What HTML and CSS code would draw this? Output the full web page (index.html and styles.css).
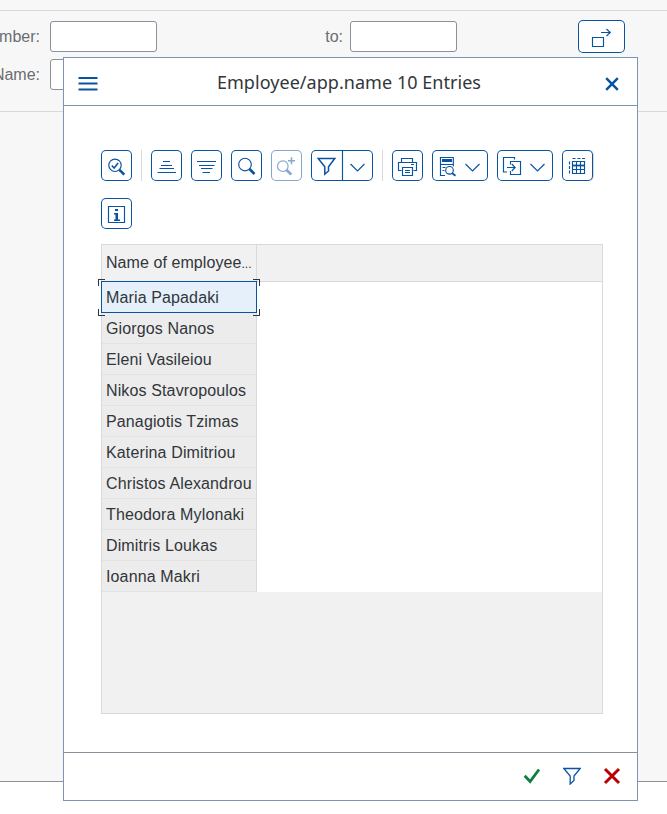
FILE: index.html
```html
<!DOCTYPE html>
<html lang="en">
<head>
<meta charset="utf-8">
<title>Employee entries</title>
<link rel="stylesheet" href="styles.css">
</head>
<body>
<main class="page">
  <section class="criteria">
    <div class="field-row">
      <label class="label first">mber:</label><span class="input"></span>
      <label class="label to">to:</label><span class="input"></span>
      <button class="btn multi"><svg width="47" height="33" viewBox="0 0 47 33"><path d="M14.5 17.5h11v9h-11zM23 12.5h9.5M28.5 9l3.8 3.5-3.8 3.5"/></svg></button>
    </div>
    <div class="field-row second">
      <label class="label first">Name:</label><span class="input"></span>
    </div>
  </section>
</main>

<div class="dialog" role="dialog">
  <header class="dialog-head">
    <svg class="menu" width="20" height="14" viewBox="0 0 20 14"><path d="M.5 1h19M.5 6.5h19M.5 12.5h19"/></svg>
    <h1 class="title">Employee/app.name 10 Entries</h1>
    <svg class="close" width="14" height="14" viewBox="0 0 14 14"><path d="M1.2 1.2l11.6 11.6M12.8 1.2L1.2 12.8"/></svg>
  </header>

  <div class="content">
    <div class="toolbar">
      <button class="btn"><svg viewBox="0 0 31 31"><circle cx="14" cy="15.3" r="6.2"/><path class="mid" d="M10.8 15.5l2.3 2.5 4-5"/><path class="bold" d="M18.5 19.8l4.8 4.8"/></svg></button>
      <i class="sep"></i>
      <button class="btn"><svg viewBox="0 0 31 31"><path d="M12 11.5h7M10 15.5h11M8.5 18.5H23M6.5 22.5H25"/></svg></button>
      <button class="btn"><svg viewBox="0 0 31 31"><path d="M6 11.5h19M8 15.5h15.5M10 18.5h11.5M11.5 22.5H19"/></svg></button>
      <button class="btn"><svg viewBox="0 0 31 31"><circle cx="14" cy="14.5" r="6.3"/><path class="bold" d="M18.5 19l5 5"/></svg></button>
      <button class="btn disabled"><svg viewBox="0 0 31 31"><circle cx="11.8" cy="16.2" r="5.3"/><path class="mid" d="M20.5 7.2v7M17 10.7h7"/><path class="bold" d="M15.5 20l4.8 4.5"/></svg></button>
      <button class="btn split"><svg viewBox="0 0 62 31" class="wide"><path class="mid" d="M7.2 8.5h16.6l-6.3 8.2V21l-3.7 3.2v-7.5z"/><path d="M31.5 0v31M39.5 14l7 7 7-7"/></svg></button>
      <i class="sep"></i>
      <button class="btn"><svg viewBox="0 0 31 31"><path d="M9.5 20.5h-3v-8h18v8h-3M9.5 12.5v-4h11v4M10.5 17.5h10v8h-10zM13 20.5h5M13 22.5h5M19 14.5h3"/></svg></button>
      <button class="btn menu-btn"><svg viewBox="0 0 56 31"><path d="M13 25.5H8.5v-18h12.800v9M8.500 14.500h12.800M10.500 17.500h3M10.500 20.500h2"/><path class="fill" d="M10 9h10v3H10z"/><circle cx="17.500" cy="20.300" r="3.800"/><path class="thick" d="M20.300 23.200l3.200 2.600"/><path d="M33.500 14l7 7 7-7"/></svg></button>
      <button class="btn menu-btn"><svg viewBox="0 0 56 31"><path d="M17.500 9.500v-2h-11V22H10M13.500 14.500v-3h10v13h-10v-3.500M10 17.500h8M14.800 14l3.400 3.500-3.400 3.500M33.500 14l7 7 7-7"/></svg></button>
      <button class="btn last"><svg viewBox="0 0 31 31"><path d="M10.500 11.500h12v12h-12zM14.500 11.500v12M18.500 11.500v12M10.500 19.500h12M10.500 8.500h3M15.500 8.500h3M20 8.500h3M7.500 11.500v3M7.500 16v3M7.500 20.500v3"/><path class="thick" d="M10 15.500h13"/></svg></button>
      <button class="btn"><svg viewBox="0 0 31 31"><path d="M7.500 8.500h16v16h-16z"/><path class="fill" d="M14 11h3v2h-3zM13 15h4v6.500h2V23h-6v-1.500h1.500v-5H13z"/></svg></button>
    </div>

    <div class="table">
      <div class="thead"><span class="th">Name of employee<small>...</small></span></div>
      <div class="tbody">
        <div class="cell selected">Maria Papadaki<i class="c tl"></i><i class="c tr"></i><i class="c bl"></i><i class="c br"></i></div>
        <div class="cell">Giorgos Nanos</div>
        <div class="cell">Eleni Vasileiou</div>
        <div class="cell">Nikos Stavropoulos</div>
        <div class="cell">Panagiotis Tzimas</div>
        <div class="cell">Katerina Dimitriou</div>
        <div class="cell">Christos Alexandrou</div>
        <div class="cell">Theodora Mylonaki</div>
        <div class="cell">Dimitris Loukas</div>
        <div class="cell">Ioanna Makri</div>
      </div>
    </div>
  </div>

  <footer class="dialog-foot">
    <svg class="ok" width="18" height="18" viewBox="0 0 18 18"><path d="M1.700 8.800l5.400 5.700L16 2.500"/></svg>
    <svg class="filter" width="18" height="18" viewBox="0 0 18 18"><path d="M.8 1.500h16.400L11 9v4.500L7.200 17V9z"/></svg>
    <svg class="cancel" width="18" height="18" viewBox="0 0 18 18"><path d="M2 2l14 14M16 2L2 16"/></svg>
  </footer>
</div>
</body>
</html>
```
FILE: styles.css
```css
* { box-sizing: border-box; }
body {
  margin: 0;
  height: 814px;
  overflow: hidden;
  background: #fff;
  font: 16px "Liberation Sans", Arial, sans-serif;
  color: #32363a;
}
.page {
  height: 782px;
  padding-top: 10px;
  background: #f7f7f7;
  border-bottom: 1px solid #89919a;
}
.criteria {
  height: 102px;
  padding-top: 9px;
  border-top: 1px solid #d9d9d9;
  border-bottom: 1px solid #d9d9d9;
}
.field-row { display: flex; align-items: center; height: 33px; }
.field-row.second { margin-top: 5px; }
.label { color: #6a6d70; white-space: nowrap; }
.label.first {
  display: flex;
  justify-content: flex-end;
  width: 40px;
  margin-right: 10px;
}
.label.to { width: 186px; margin-right: 7px; text-align: right; }
.input {
  width: 107px;
  height: 31px;
  background: #fff;
  border: 1px solid #89919a;
  border-radius: 3px;
}
.btn {
  flex: none;
  width: 31px;
  height: 31px;
  padding: 0;
  background: #fff;
  border: 0;
  border-radius: 5px;
  box-shadow: inset 0 0 0 1px #0854a0;
}
svg { display: block; fill: none; stroke: #0854a0; }
.btn svg { width: 100%; height: 100%; stroke-width: 1.15; }
.btn .bold { stroke-width: 2.6; }
.btn .mid { stroke-width: 1.5; }
.btn .thick { stroke-width: 1.8; }
.btn .fill { fill: #0854a0; stroke: none; }
.btn.multi { width: 47px; height: 33px; margin-left: 121px; }
.btn.disabled { opacity: .5; }
.btn.split { width: 62px; }
.btn.menu-btn { width: 56px; }
.btn.last { box-shadow: inset 0 0 0 1px #0854a0, 1px 0 #d9d9d9; }

.dialog {
  position: absolute;
  left: 63px;
  top: 57px;
  display: flex;
  flex-direction: column;
  width: 575px;
  height: 744px;
  background: #fff;
  border: 1px solid #7996b4;
}
.dialog-head {
  display: flex;
  align-items: center;
  height: 48px;
  padding: 4px 18px 0 14px;
  border-bottom: 1px solid #7996b4;
}
.menu { stroke-width: 2; }
.title {
  flex: 1;
  margin: 0 5px 4px 0;
  font: 18px/26px "Noto Sans", sans-serif;
  letter-spacing: .04px;
  text-align: center;
  white-space: nowrap;
}
.close { stroke-width: 2.5; }
.content { flex: 1; padding: 44px 34px 0 37px; }
.toolbar {
  display: flex;
  flex-wrap: wrap;
  gap: 17px 9px;
  width: 495px;
}
.sep { width: 1px; height: 31px; background: #d9d9d9; }
.table {
  width: 502px;
  height: 470px;
  margin-top: 15px;
  background: #f1f1f1;
  border: 1px solid #d9d9d9;
  letter-spacing: .13px;
}
.thead { display: flex; height: 37px; border-bottom: 1px solid #d9d9d9; }
.th {
  width: 155px;
  padding-left: 4px;
  border-right: 1px solid #d9d9d9;
  line-height: 35px;
  letter-spacing: .07px;
  white-space: nowrap;
}
.th small { font-size: 12px; }
.tbody { height: 310px; background: #fff; }
.cell {
  position: relative;
  width: 155px;
  height: 31px;
  padding-left: 4px;
  background: #ececec;
  border-right: 1px solid #d9d9d9;
  border-bottom: 1px solid #e2e2e2;
  line-height: 31px;
  white-space: nowrap;
}
.selected {
  z-index: 1;
  background: #e5f0fa;
  border-color: transparent;
}
.selected::before {
  content: "";
  position: absolute;
  inset: -1px;
  border: 1px solid #0854a0;
}
.c { position: absolute; width: 7px; height: 7px; border: 0 solid #32363a; }
.tl { left: -4px; top: -3px; border-width: 1px 0 0 1px; }
.tr { right: -4px; top: -3px; border-width: 1px 1px 0 0; }
.bl { left: -4px; bottom: -4px; border-width: 0 0 1px 1px; }
.br { right: -4px; bottom: -4px; border-width: 0 1px 1px 0; }
.dialog-foot {
  display: flex;
  justify-content: flex-end;
  align-items: center;
  gap: 22px;
  height: 48px;
  padding: 0 16px 1px 0;
  border-top: 1px solid #89919a;
}
.ok { stroke: #107e3e; stroke-width: 2.8; }
.filter { stroke-width: 1.3; }
.cancel { stroke: #b00; stroke-width: 3; }
```
